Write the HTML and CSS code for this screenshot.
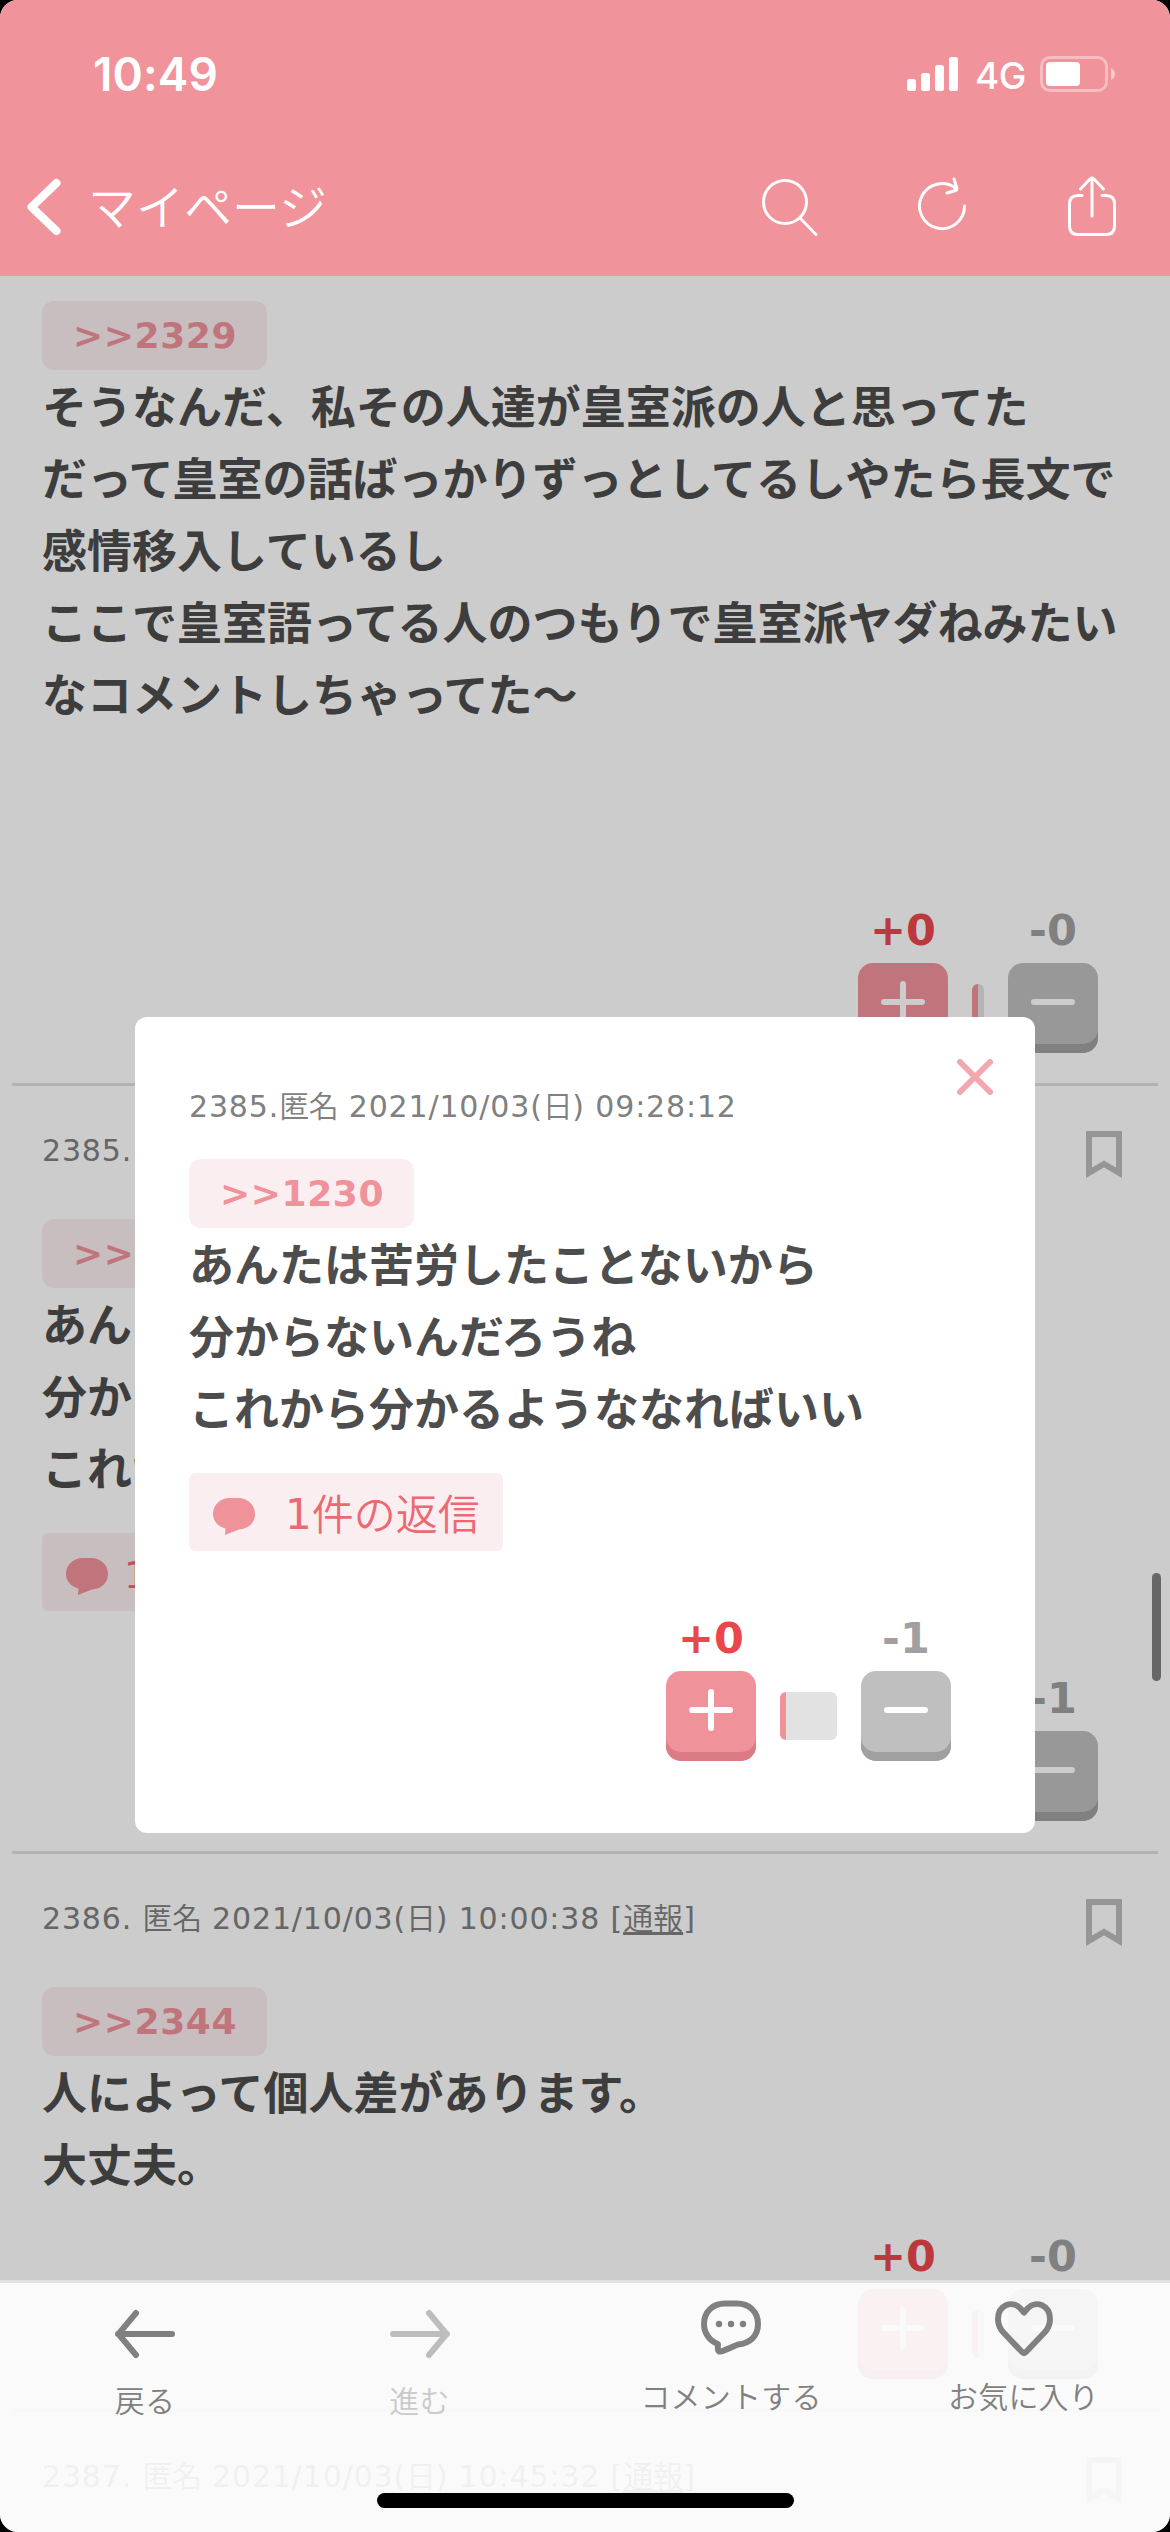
FILE: index.html
```html
<!DOCTYPE html>
<html lang="ja">
<head>
<meta charset="utf-8">
<title>マイページ</title>
<link rel="stylesheet" href="styles.css">
</head>
<body>
<svg class="sprite" width="0" height="0" aria-hidden="true">
  <symbol id="plus" viewBox="0 0 44 44"><path d="M3 22H41M22 4V40"/></symbol>
  <symbol id="minus" viewBox="0 0 44 44"><path d="M3 22H41"/></symbol>
  <symbol id="bookmark" viewBox="0 0 36 48"><path d="M3 3H33V41.800L18 33L3 41.800Z"/></symbol>
  <symbol id="bubble" viewBox="0 0 42 38"><path d="M17 0H25C35 0 42 7 42 16C42 25 35 31 26 31.500C22 33 17 35 12 37L12.500 30.500C5 28.500 0 23 0 16C0 7 7 0 17 0Z"/></symbol>
</svg>
<div class="device">
<div class="screen">
  <header class="header">
    <div class="status">
      <span class="clock">10:49</span>
      <svg class="signal" viewBox="0 0 51 34"><rect x="0" y="22" width="9" height="12" rx="2.500"/><rect x="14" y="16" width="9" height="18" rx="2.500"/><rect x="28" y="8" width="9" height="26" rx="2.500"/><rect x="42" y="0" width="9" height="34" rx="2.500"/></svg>
      <span class="network">4G</span>
      <svg class="battery" viewBox="0 0 76 36"><rect x="1.500" y="1.500" width="65" height="33" rx="8.500" fill="none" stroke="#fff" stroke-opacity=".4" stroke-width="3"/><rect x="6" y="6" width="34" height="24" rx="4" fill="#fff"/><path d="M71 12Q75 14 75 18T71 24Z" fill="#fff" fill-opacity=".5"/></svg>
    </div>
    <nav class="nav">
      <svg class="back" viewBox="0 0 34 58"><path d="M29.500 5L4.500 29L29.500 53"/></svg>
      <span class="title">マイページ</span>
      <div class="actions">
        <svg class="action" viewBox="0 0 60 64"><circle cx="25" cy="27" r="21.500"/><path d="M40 43L56 59.500"/></svg>
        <svg class="action" viewBox="0 0 60 64"><path d="M53.500 31A22.500 22.500 0 1 1 45 13.500M43 4L46 13.500Q46 15 44.500 15.500L36 18"/></svg>
        <svg class="action" viewBox="0 0 60 64"><path d="M20 20.500H16Q7.500 20.500 7.500 29V51Q7.500 59.500 16 59.500H44Q52.500 59.500 52.500 51V29Q52.500 20.500 44 20.500H40M30 41V4M18.500 14L28 4Q30 2 32 4L41.500 14"/></svg>
      </div>
    </nav>
  </header>

  <main class="feed">
    <article class="comment first">
      <a class="anchor">&gt;&gt;2329</a>
      <p class="text">そうなんだ、私その人達が皇室派の人と思ってた<br>だ<span class="tight">って</span>皇室の話ばっかりずっとしてるしやたら長文で<br>感情移入しているし<br>ここで皇室語<span class="tight">って</span>る人のつもりで皇室派ヤダねみたい<br>なコメントしちゃ<span class="tight">って</span>た〜</p>
      <div class="votes late">
        <div class="vote"><span class="count up">+0</span><span class="key pink"><svg><use href="#plus"/></svg></span></div>
        <span class="ratio"></span>
        <div class="vote"><span class="count">-0</span><span class="key"><svg><use href="#minus"/></svg></span></div>
      </div>
    </article>

    <article class="comment">
      <div class="meta"><span>2385. <span class="name">匿名</span> 2021/10/03(<span class="name">日</span>) 09:28:12 [<u>通報</u>]</span><svg class="mark"><use href="#bookmark"/></svg></div>
      <a class="anchor">&gt;&gt;1230</a>
      <p class="text">あんたは苦労したことないから<br>分からないんだろうね<br>これから分かるようななればいい</p>
      <a class="replies small"><svg><use href="#bubble"/></svg><span class="num">1</span><span>件の返信</span></a>
      <div class="votes spaced">
        <div class="vote"><span class="count up">+0</span><span class="key pink"><svg><use href="#plus"/></svg></span></div>
        <span class="ratio wide"></span>
        <div class="vote"><span class="count">-1</span><span class="key"><svg><use href="#minus"/></svg></span></div>
      </div>
    </article>

    <article class="comment">
      <div class="meta"><span>2386. <span class="name">匿名</span> 2021/10/03(<span class="name">日</span>) 10:00:38 [<u>通報</u>]</span><svg class="mark"><use href="#bookmark"/></svg></div>
      <a class="anchor">&gt;&gt;2344</a>
      <p class="text">人によって個人差があります。<br>大丈夫。</p>
      <div class="votes">
        <div class="vote"><span class="count up">+0</span><span class="key pink"><svg><use href="#plus"/></svg></span></div>
        <span class="ratio"></span>
        <div class="vote"><span class="count">-0</span><span class="key"><svg><use href="#minus"/></svg></span></div>
      </div>
    </article>

    <article class="comment">
      <div class="meta"><span>2387. <span class="name">匿名</span> 2021/10/03(<span class="name">日</span>) 10:45:32 [<u>通報</u>]</span><svg class="mark"><use href="#bookmark"/></svg></div>
    </article>
  </main>

  <div class="overlay"></div>

  <section class="modal">
    <svg class="close" viewBox="0 0 36 36"><path d="M3 3L33 33M33 3L3 33"/></svg>
    <div class="meta"><span>2385.<span class="name">匿名</span> 2021/10/03(<span class="name">日</span>) 09:28:12</span></div>
    <a class="anchor">&gt;&gt;1230</a>
    <p class="text">あんたは苦労したことないから<br>分からないんだろうね<br>これから分かるようななればいい</p>
    <a class="replies"><svg><use href="#bubble"/></svg><span class="num">1</span><span>件の返信</span></a>
    <div class="votes spaced">
      <div class="vote"><span class="count up">+0</span><span class="key pink"><svg><use href="#plus"/></svg></span></div>
      <span class="ratio wide"></span>
      <div class="vote"><span class="count">-1</span><span class="key"><svg><use href="#minus"/></svg></span></div>
    </div>
  </section>

  <div class="scrollbar"></div>

  <footer class="tabs">
    <a class="tab low"><svg viewBox="0 0 60 60"><path d="M57 30H3M21 9L3.500 30L21 51"/></svg>戻る</a>
    <a class="tab low off"><svg viewBox="0 0 60 60"><path d="M3 30H57M39 9L56.500 30L39 51"/></svg>進む</a>
    <a class="tab"><svg viewBox="0 0 60 60"><path d="M24 6.500H36C48 6.500 57 14.500 57 27C57 39 49 46.500 37 47.500C32 49.500 25 53 20 54.500C17 55 16.500 53.500 17 47C8.500 44 3 36 3 27C3 14.500 12 6.500 24 6.500Z"/><g class="dots"><circle cx="18" cy="27" r="3.200"/><circle cx="30" cy="27" r="3.200"/><circle cx="42" cy="27" r="3.200"/></g></svg>コメントする</a>
    <a class="tab"><svg viewBox="0 0 60 60"><path d="M30 15.500L26 11C18 3 4 8 4 22C4 28 5.500 31 9 35L28 55Q30 57 32 55L51 35C54.500 31 56 28 56 22C56 8 42 3 34 11Z"/></svg>お気に入り</a>
  </footer>
  <div class="home"></div>
</div>
</div>
</body>
</html>
```

FILE: styles.css
```css
* { box-sizing: border-box; }
body { margin: 0; background: #000; font-family: "DejaVu Sans", "Noto Sans CJK JP", sans-serif; }
.sprite { position: absolute; }
.device { width: 1170px; height: 2532px; background: #000; }
.screen { position: relative; height: 2532px; overflow: hidden; border-radius: 18px; background: #fff; display: flex; flex-direction: column; }

.header { height: 276px; flex: none; background: #f0939a; color: #fff; position: relative; z-index: 2; }
.status { height: 148px; display: flex; align-items: center; padding-left: 93px; font-family: Inter, sans-serif; }
.clock { width: 814px; font-size: 46px; font-weight: 600; letter-spacing: .1px; }
.signal { width: 51px; height: 34px; fill: #fff; }
.network { width: 65px; margin-left: 17px; font-size: 37px; font-weight: 500; letter-spacing: -.5px; padding-top: 3px; }
.battery { width: 76px; height: 36px; }
.nav { height: 118px; display: flex; align-items: center; padding: 0 48px 0 27px; }
.back { width: 34px; height: 58px; fill: none; stroke: #fff; stroke-width: 8; stroke-linecap: round; stroke-linejoin: round; }
.title { margin: 0 0 7px 27px; font: 350 48px/72px "Noto Sans CJK JP", sans-serif; white-space: nowrap; }
.actions { margin-left: auto; display: flex; gap: 91px; }
.action { width: 60px; height: 64px; fill: none; stroke: #fff; stroke-width: 3; stroke-linecap: round; stroke-linejoin: round; }

.feed { flex: none; }
.comment { margin: 0 12px; padding: 0 60px 30px 30px; border-top: 3px solid #e0e0e0; }
.comment.first { border: 0; padding-top: 25px; }
.meta { height: 133px; display: flex; align-items: flex-start; color: #808080; font-size: 30px; line-height: 36px; letter-spacing: .85px; padding-top: 47px; white-space: nowrap; }
.meta u { text-underline-offset: 3px; letter-spacing: 0; }
.name { letter-spacing: -.4px; }
.name, .meta u { font-family: "Noto Sans CJK JP", sans-serif; font-weight: 350; line-height: 1; }
.mark { width: 36px; height: 48px; margin: -2px -24px 0 auto; fill: none; stroke: #bcbcbc; stroke-width: 6; }
.anchor { display: flex; align-items: center; width: 225px; height: 69px; padding-left: 31px; border-radius: 12px; background: #fbeef1; color: #f0929a; font-size: 36px; font-weight: 700; letter-spacing: .6px; }
.text { margin: -1px 0 0; padding-bottom: 1px; color: #4d4d4d; font: 700 45px/72px "Noto Sans CJK JP", sans-serif; white-space: nowrap; }
.tight { letter-spacing: -1.200px; }
.replies { display: flex; align-items: center; width: 314px; height: 78px; margin-top: 29px; padding: 5px 0 0 24px; border-radius: 6px; background: #fbeef1; color: #ea6a73; font: 350 42px/60px "Noto Sans CJK JP", sans-serif; white-space: nowrap; }
.replies svg { width: 42px; height: 38px; margin-right: 30px; margin-top: 4px; fill: #f0929a; flex: none; }
.num { font-family: "DejaVu Sans", sans-serif; font-weight: 400; }
.num + span { margin-top: -6px; }
.replies.small { font-size: 38px; }
.replies.small svg { margin-right: 16px; }

.votes { display: flex; justify-content: flex-end; align-items: flex-end; gap: 24px; margin-top: 23px; }
.votes.spaced { margin-top: 54px; }
.votes.late { margin-top: 167px; }
.vote { width: 90px; display: flex; flex-direction: column; align-items: center; }
.count { height: 66px; color: #a0a0a0; font-size: 43px; line-height: 66px; font-weight: 700; }
.count.up { color: #ea464b; }
.key { width: 90px; height: 90px; border-radius: 15px; background: #bfbfbf; box-shadow: inset 0 -9px #a0a0a0; display: flex; justify-content: center; padding-top: 17px; }
.key.pink { background: #f0929a; box-shadow: inset 0 -9px #db7b83; }
.key svg { width: 44px; height: 44px; fill: none; stroke: #fff; stroke-width: 6; stroke-linecap: round; }
.ratio { width: 12px; height: 48px; margin-bottom: 21px; border-radius: 6px; background: linear-gradient(90deg, #f0929a 6px, #e2e2e2 6px); }
.ratio.wide { width: 57px; }

.overlay { position: absolute; inset: 276px 0 0; background: rgba(0, 0, 0, .2); }
.modal { position: absolute; left: 135px; top: 1017px; width: 900px; height: 816px; padding: 0 84px 0 54px; border-radius: 12px; background: #fff; }
.modal .meta { height: 142px; padding-top: 72px; }
.close { position: absolute; right: 42px; top: 42px; width: 36px; height: 36px; fill: none; stroke: #f2a8ae; stroke-width: 6; stroke-linecap: round; }
.scrollbar { position: absolute; left: 1152px; top: 1573px; width: 9px; height: 108px; border-radius: 5px; background: #666; }

.tabs { position: absolute; left: 0; right: 0; bottom: 0; height: 252px; border-top: 3px solid #e2e2e2; background: rgba(255, 255, 255, .9); background-clip: padding-box; display: grid; grid-template-columns: 290px 259px 364px 221px; }
.tab { display: flex; flex-direction: column; align-items: center; padding-top: 14px; color: #808080; font: 350 30px/44px "Noto Sans CJK JP", sans-serif; letter-spacing: .2px; white-space: nowrap; }
.tab.low { padding-top: 21px; }
.tab.off { color: #cacaca; }
.tab.off svg { stroke: #bdbdbd; }
.tab svg { width: 60px; height: 60px; margin-bottom: 16px; fill: none; stroke: currentColor; stroke-width: 6; stroke-linecap: round; stroke-linejoin: round; }
.tab.low svg { margin-bottom: 13px; }
.tab svg .dots { fill: currentColor; stroke: none; }
.home { position: absolute; left: 377px; bottom: 24px; width: 417px; height: 15px; border-radius: 8px; background: #000; }
```
